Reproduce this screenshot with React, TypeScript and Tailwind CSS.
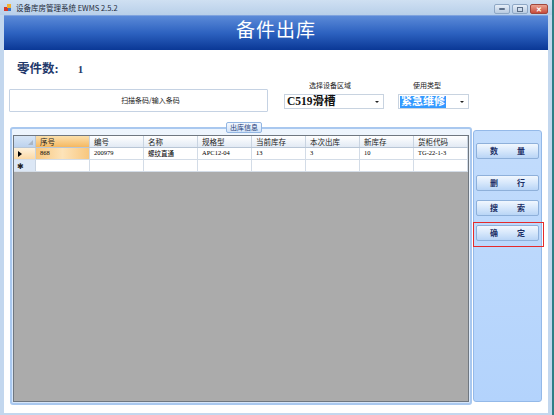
import React from 'react';

const cjk = { fontFamily: '"Noto Sans CJK SC", "Liberation Sans", sans-serif' };
const serif = { fontFamily: '"Liberation Serif", "Noto Sans CJK SC", serif' };

const columns = ['序号', '编号', '名称', '规格型', '当前库存', '本次出库', '新库存', '货柜代码'];
const row = ['868', '200979', '螺纹直通', 'APC12-04', '13', '3', '10', 'TG-22-1-3'];

function ActionButton({ label }: { label: string }) {
  return (
    <div className="h-[16px] w-[63px] rounded-[2px] border border-[#8eb0da] bg-linear-to-b from-[#f1f7fe] via-[#d6e7fb] to-[#b9d5f6] flex items-center justify-center gap-[19px]">
      {label.split('').map((ch) => (
        <span key={ch} className="text-[8px] font-bold text-[#1c2f66] leading-none">{ch}</span>
      ))}
    </div>
  );
}

function Grid() {
  return (
    <div className="w-[456px] h-[267px] border border-[#6f7780] bg-[#ababab] flex flex-col" style={cjk}>
      {/* header */}
      <div className="flex h-[12px] border-b border-[#b8c6d6]">
        <div className="relative w-[22px] shrink-0 bg-linear-to-b from-[#d8e6f6] to-[#bcd2ee] border-r border-[#b8c6d6]">
          <div className="absolute right-[2px] bottom-[2px] w-0 h-0 border-l-[5px] border-l-transparent border-b-[5px] border-b-[#a9b6c6]" />
        </div>
        {columns.map((c, i) => (
          <div
            key={c}
            className={`${i === 7 ? 'flex-1' : 'w-[54px]'} shrink-0 border-r border-[#c9d4e1] px-[4px] flex items-center text-[7.5px] leading-none text-[#1b1b1b] ${
              i === 0 ? 'bg-linear-to-b from-[#fbe0ac] to-[#f5b85f]' : 'bg-linear-to-b from-[#ffffff] to-[#e2eaf4]'
            }`}
          >
            {c}
          </div>
        ))}
      </div>
      {/* data row */}
      <div className="flex h-[12px] border-b border-[#d3dce7] bg-white">
        <div className="w-[22px] shrink-0 bg-linear-to-b from-[#fdf1dc] to-[#fbd9a6] border-r border-[#c9d4e1] flex items-center pl-[4px]">
          <div className="w-0 h-0 border-t-[3px] border-t-transparent border-b-[3px] border-b-transparent border-l-[4px] border-l-black" />
        </div>
        {row.map((v, i) => (
          <div
            key={i}
            className={`${i === 7 ? 'flex-1' : 'w-[54px]'} shrink-0 border-r border-[#d3dce7] px-[4px] flex items-center text-[6.5px] leading-none text-black ${
              i === 0 ? 'bg-linear-to-r from-[#f8c77e] via-[#fde3b8] to-[#f8c77e]' : ''
            }`}
            style={i === 2 ? cjk : serif}
          >
            {v}
          </div>
        ))}
      </div>
      {/* new row */}
      <div className="flex h-[12px] border-b border-[#d3dce7] bg-white">
        <div className="w-[22px] shrink-0 bg-[#dce7f5] border-r border-[#c9d4e1] flex items-center pl-[3px] text-[8px] leading-none text-[#222]">
          ✱
        </div>
        {columns.map((c, i) => (
          <div key={c} className={`${i === 7 ? 'flex-1' : 'w-[54px]'} shrink-0 border-r border-[#d3dce7]`} />
        ))}
      </div>
      <div className="flex-1" />
    </div>
  );
}

export default function App() {
  return (
    <div className="w-[554px] h-[415px] overflow-hidden bg-[#2f7f86] flex">
      <div className="w-[552px] h-[415px] bg-[#c3d7ee] flex flex-col">
        {/* title bar */}
        <div className="h-[15px] flex items-center bg-linear-to-b from-[#cfe0f2] to-[#b8cfe9] px-[4px]">
          <svg width="8" height="8" viewBox="0 0 8 8" className="shrink-0">
            <rect x="0" y="3" width="4" height="4" fill="#d33b2c" />
            <rect x="3" y="0" width="4" height="4" fill="#f2b233" />
            <rect x="4" y="4" width="3" height="3" fill="#3a78c8" />
          </svg>
          <span className="ml-[4px] text-[7.5px] leading-none text-[#1d2a3a]" style={cjk}>
            设备库房管理系统 EWMS 2.5.2
          </span>
          <div className="ml-auto flex items-center gap-[2px] mt-[3px]">
            <div className="w-[16px] h-[10px] rounded-[2px] border border-[#8ea7c4] bg-linear-to-b from-[#e6eef8] to-[#b9cbe0] flex items-center justify-center">
              <div className="w-[6px] h-[2px] bg-[#5b6e88] rounded-[1px]" />
            </div>
            <div className="w-[16px] h-[10px] rounded-[2px] border border-[#8ea7c4] bg-linear-to-b from-[#e6eef8] to-[#b9cbe0] flex items-center justify-center">
              <div className="w-[6px] h-[5px] border border-[#5b6e88]" />
            </div>
            <div className="w-[18px] h-[10px] rounded-[2px] border border-[#a0473c] bg-linear-to-b from-[#e9a08e] to-[#c7493a] flex items-center justify-center text-[7px] leading-none text-white font-bold">
              ✕
            </div>
          </div>
        </div>

        <div className="flex-1 flex flex-col px-[4px] pb-[2px]">
          {/* banner */}
          <div className="h-[35px] bg-linear-to-b from-[#5b8ad8] via-[#2d62c0] to-[#0a3896] border-t border-[#7fa3de] flex items-center justify-center pb-[9px]">
            <span className="text-[19px] leading-none text-white tracking-[1px]" style={cjk}>
              备件出库
            </span>
          </div>

          {/* client */}
          <div className="flex-1 bg-white flex flex-col">
            {/* top section */}
            <div className="h-[72px] flex items-start">
              <div className="w-[264px] flex flex-col">
                <div className="flex items-center mt-[12px] ml-[13px] h-[15px]" style={serif}>
                  <span className="text-[12.5px] font-bold text-[#23396b] leading-none">零件数:</span>
                  <span className="ml-[19px] text-[11px] font-bold text-[#23396b] leading-none">1</span>
                </div>
                <div className="ml-[5px] mt-[12px] w-[259px] h-[23px] border border-[#c5d2e3] rounded-[1px] flex items-center justify-center pl-[24px]">
                  <span className="text-[7px] leading-none text-[#222]" style={cjk}>扫描条码/输入条码</span>
                </div>
              </div>

              <div className="ml-[16px] w-[100px] flex flex-col mt-[31px]">
                <span className="ml-[25px] h-[9px] text-[7px] leading-[9px] text-[#222]" style={cjk}>选择设备区域</span>
                <div className="mt-[4px] h-[15px] border border-[#c8d3e0] flex items-center pl-[2px] pr-[4px]">
                  <span className="text-[11.5px] font-bold leading-none text-[#111]" style={serif}>C519滑槽</span>
                  <div className="ml-auto w-0 h-0 border-l-[2px] border-l-transparent border-r-[2px] border-r-transparent border-t-[2px] border-t-[#222]" />
                </div>
              </div>

              <div className="ml-[14px] w-[71px] flex flex-col mt-[31px]">
                <span className="ml-[15px] h-[9px] text-[7px] leading-[9px] text-[#222]" style={cjk}>使用类型</span>
                <div className="mt-[4px] h-[15px] border border-[#c8d3e0] flex items-center pl-[1px] pr-[4px]">
                  <span className="h-[12px] bg-[#3399ff] px-[1px] flex items-center text-[11px] font-bold leading-none text-white" style={serif}>紧急维修</span>
                  <div className="ml-auto w-0 h-0 border-l-[2px] border-l-transparent border-r-[2px] border-r-transparent border-t-[2px] border-t-[#222]" />
                </div>
              </div>
            </div>

            {/* bottom section */}
            <div className="flex items-start">
              <div className="relative ml-[6px] mt-[5px] w-[462px] h-[278px] rounded-[3px] border-2 border-[#a9c8ef] bg-linear-to-b from-[#eef5fd] to-[#d7e6f9]">
                <div className="absolute -top-[7px] left-[214px] h-[11px] px-[3px] rounded-[2px] border border-[#93b6e2] bg-linear-to-b from-[#f4f8fe] to-[#d2e3f8] flex items-center">
                  <span className="text-[7px] leading-none text-[#1f3d78]" style={cjk}>出库信息</span>
                </div>
                <div className="ml-[1px] mt-[6px]">
                  <Grid />
                </div>
              </div>

              <div className="relative ml-[1px] mt-[8px] w-[69px] h-[272px] rounded-[3px] border border-[#94b9e8] bg-linear-to-b from-[#c2dcfc] to-[#b3d3fc] flex flex-col pl-[2px]" style={cjk}>
                <div className="mt-[12px]"><ActionButton label="数量" /></div>
                <div className="mt-[16px]"><ActionButton label="删行" /></div>
                <div className="mt-[9px]"><ActionButton label="搜索" /></div>
                <div className="mt-[9px]"><ActionButton label="确定" /></div>
                <div className="absolute left-[-1px] top-[91px] w-[71px] h-[25px] border-[1.5px] border-[#e52b2b]" />
              </div>
            </div>
          </div>
        </div>
      </div>
    </div>
  );
}
